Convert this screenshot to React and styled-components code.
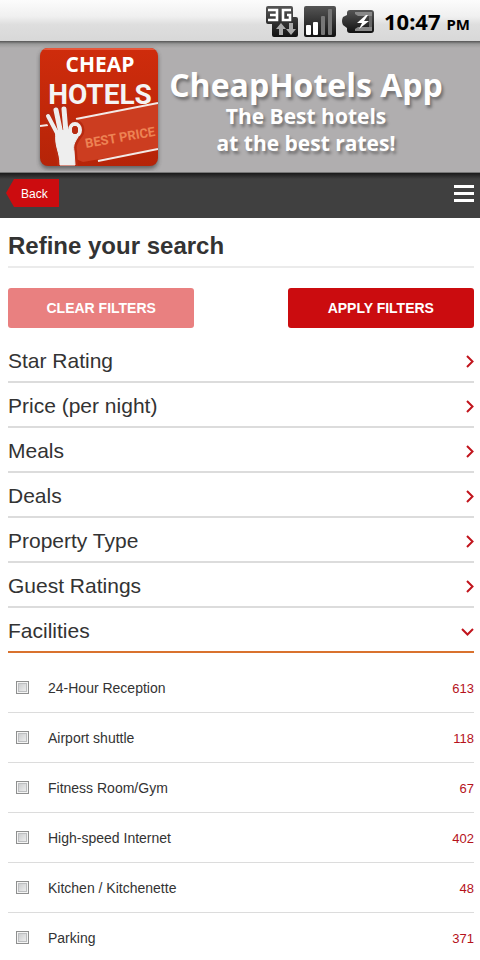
import React, { useState } from 'react';
import styled, { createGlobalStyle, css } from 'styled-components';

const GlobalStyle = createGlobalStyle`
  * {
    box-sizing: border-box;
  }

  body {
    margin: 0;
    background: #fff;
    color: #333;
    font-family: "Liberation Sans", Arial, sans-serif;
  }

  button {
    font-family: inherit;
  }
`;

const StatusBar = styled.div`
  display: flex;
  align-items: center;
  justify-content: flex-end;
  height: 41px;
  padding: 3px 10px 0 0;
  background: linear-gradient(#fcfcfc, #f0f0f0 40%, #dedede 60%, #d8d8d8);
  color: #000;
  font-family: "Noto Sans", "Open Sans", sans-serif;
  font-weight: 700;
`;

const StatusIcons = styled.svg`
  display: block;
  margin-right: 8px;
`;

const Clock = styled.div`
  font-size: 22px;
  line-height: 32px;

  small {
    margin-left: 6px;
    font-size: 15px;
  }
`;

const Banner = styled.header`
  display: flex;
  align-items: flex-start;
  height: 132px;
  padding: 4px 0 0 36px;
  background: linear-gradient(#555, #999 3px, #b0aeaf 7px);
  border-bottom: 1px solid #777;
`;

const Slogan = styled.div`
  padding-top: 22px;
  width: 286px;
  color: #fff;
  font-family: "Open Sans", "Noto Sans", sans-serif;
  font-weight: 700;
  text-align: center;
  text-shadow: 2px 3px 3px rgba(0, 0, 0, .35);

  h1 {
    margin: 0;
    font-size: 32px;
    line-height: 36px;
    white-space: nowrap;
  }

  p {
    margin: 0;
    font-size: 21px;
    line-height: 27px;
  }
`;

const Nav = styled.nav`
  display: flex;
  align-items: flex-start;
  justify-content: space-between;
  height: 45px;
  padding: 6px 6px 0;
  background: linear-gradient(#1a1a1a, #404040 6px);
`;

const BackLink = styled.a`
  width: 53px;
  height: 28px;
  padding-left: 15px;
  background: #cc0c0f;
  clip-path: polygon(0 50%, 8px 0, 100% 0, 100% 100%, 8px 100%);
  color: #fff;
  font-size: 12px;
  line-height: 30px;
  text-decoration: none;
`;

const MenuButton = styled.button`
  display: block;
  padding: 6px 0 0;
  border: none;
  background: none;
  cursor: pointer;

  svg {
    display: block;
  }
`;

const Content = styled.main`
  padding: 0 6px 0 8px;
`;

const Heading = styled.h2`
  margin: 0;
  padding-top: 12px;
  height: 50px;
  border-bottom: 2px solid #ebebeb;
  font-size: 24px;
  line-height: 32px;
`;

const Actions = styled.div`
  display: flex;
  justify-content: space-between;
  padding: 20px 0 10px;
`;

const ActionButton = styled.button`
  width: 40%;
  height: 40px;
  padding: 0;
  border: none;
  border-radius: 3px;
  background: ${p => (p.$muted ? '#e98080' : '#cb0c0f')};
  color: #fff;
  font-size: 14px;
  font-weight: 700;
  cursor: pointer;
`;

const SectionButton = styled.button`
  display: flex;
  align-items: center;
  justify-content: space-between;
  width: 100%;
  height: 45px;
  padding: 2px 0 0;
  border: none;
  border-bottom: 2px solid #dcdcdc;
  background: none;
  color: #333;
  font-size: 21px;
  text-align: left;
  cursor: pointer;

  svg {
    margin-top: 2px;
  }

  ${p => p.$open && css`
    border-bottom-color: #d9722e;
  `}
`;

const List = styled.ul`
  margin: 0;
  padding: 10px 0 0;
  list-style: none;
`;

const Option = styled.label`
  display: flex;
  align-items: center;
  height: 50px;
  padding-left: 8px;
  border-bottom: 1px solid #dcdcdc;
  font-size: 14px;
`;

const Checkbox = styled.input`
  appearance: none;
  width: 13px;
  height: 13px;
  margin: 0 19px 0 0;
  border: 1px solid #8e8f8f;
  background: linear-gradient(135deg, #c4c6c8, #f4f4f4);
  box-shadow: inset 0 0 0 1px #f4f4f4, inset 0 0 0 2px #bcbec0;

  &:checked {
    background: #cb0c0f;
  }
`;

const Count = styled.span`
  margin-left: auto;
  padding-top: 1px;
  color: #b5121b;
  font-size: 13px;
`;

const SECTIONS = [
  'Star Rating',
  'Price (per night)',
  'Meals',
  'Deals',
  'Property Type',
  'Guest Ratings',
  'Facilities',
];

const FACILITIES = [
  { name: '24-Hour Reception', count: 613 },
  { name: 'Airport shuttle', count: 118 },
  { name: 'Fitness Room/Gym', count: 67 },
  { name: 'High-speed Internet', count: 402 },
  { name: 'Kitchen / Kitchenette', count: 48 },
  { name: 'Parking', count: 371 },
];

function PhoneStatus() {
  return (
    <StatusIcons width="110" height="32" viewBox="0 1 110 32">
      <defs>
        <linearGradient id="chip" x1="0" y1="0" x2="0" y2="1">
          <stop offset="0" stopColor="#555" />
          <stop offset="1" stopColor="#111" />
        </linearGradient>
      </defs>
      {/* 3G with data arrows */}
      <path d="M2 1h23q2 0 2 2v9h3q2 0 2 2v16q0 2-2 2H8q-2 0-2-2V19H2q-2 0-2-2V3q0-2 2-2z" fill="url(#chip)" />
      <path d="M2 5h9v10H2M4 10h7M25 5h-8v10h7v-5h-3" fill="none" stroke="#fff" strokeWidth="2.6" />
      <path d="M15 18l5 6h-3v6h-4v-6h-3zM25 30l5-6h-3v-6h-4v6h-3z" fill="#aaa" />
      {/* signal */}
      <rect x="38" y="1" width="32" height="31" rx="2" fill="url(#chip)" />
      <rect x="40" y="20" width="5" height="10" rx="1" fill="#fff" />
      <rect x="47" y="17" width="5" height="13" rx="1" fill="#fff" />
      <rect x="55" y="11" width="4" height="19" rx="1" fill="#777" />
      <rect x="62" y="4" width="4" height="26" rx="1" fill="#777" />
      {/* battery */}
      <path d="M84 5h21q3 0 3 3v17q0 3-3 3H84q-3 0-3-3v-2l-4-3q-2-4 0-8l4-2V8q0-3 3-3z" fill="url(#chip)" />
      <path d="M89 7h17v4H92l-3-2zM89 26h17v-4H92l-3 2z" fill="#888" />
      <path d="M103 11h3v11h-3z" fill="#666" />
      <path d="M100 10l-9 8h5l-3 6 10-8h-5l4-6z" fill="#fff" />
    </StatusIcons>
  );
}

function Logo() {
  return (
    <svg width="127" height="126" viewBox="0 0 127 126" role="img" aria-label="Cheap Hotels, best price">
      <defs>
        <linearGradient id="tile" x1="0" y1="0" x2="0" y2="1">
          <stop offset="0" stopColor="#cf2c0c" />
          <stop offset="1" stopColor="#b52408" />
        </linearGradient>
        <clipPath id="tileClip">
          <rect x="4" y="3" width="118" height="118" rx="8" />
        </clipPath>
        <filter id="soft" x="-10%" y="-10%" width="120%" height="120%">
          <feGaussianBlur stdDeviation="2" />
        </filter>
      </defs>
      <rect x="4" y="5" width="118" height="119" rx="8" fill="#333" opacity=".6" filter="url(#soft)" />
      <rect x="4" y="3" width="118" height="118" rx="8" fill="url(#tile)" />
      <g clipPath="url(#tileClip)" fontWeight="700">
        <path d="M4 4h118" stroke="#e8563a" strokeWidth="2" />
        <path d="M40 74L122 58v46L47 117l-12-5z" fill="#cc3d20" />
        <path d="M4 81l8-1M40 74l82-16M62 116l60-12" fill="none" stroke="#f3e9e6" strokeWidth="2" />
        <text x="64" y="27" fontSize="21" fontFamily="Open Sans, sans-serif" fill="#fff" textAnchor="middle">CHEAP</text>
        <text x="64" y="59" fontSize="28" fontFamily="Roboto, sans-serif" fill="#f4f4f4" textAnchor="middle">HOTELS</text>
        <text transform="translate(50 103) rotate(-10)" fontSize="13" fontFamily="Roboto, sans-serif" fill="#ed8354">BEST PRICE</text>
        {/* hand: dark outline first, white shape over it */}
        {[{ color: '#b82a10', grow: 5 }, { color: '#eee', grow: 0 }].map(({ color, grow }) => (
          <g key={color} fill="none" stroke={color} strokeLinecap="round" strokeLinejoin="round">
            <path d="M12 71l10 19" strokeWidth={4 + grow} />
            <path d="M20 65l5 24M28 64l2 24" strokeWidth={5 + grow} />
            <ellipse cx="39" cy="85" rx="5" ry="6" strokeWidth={4 + grow} />
            <path
              d="M20 86l13-1c1 6 4 8 9 7-4 6-5 9-4 14l1 14H24c0-14-6-18-4-34z"
              fill={color}
              strokeWidth={1 + grow}
            />
          </g>
        ))}
        <ellipse cx="39" cy="85" rx="3" ry="4" fill="#b82a10" />
      </g>
    </svg>
  );
}

function Chevron({ open }) {
  return open ? (
    <svg width="13" height="8" viewBox="0 0 13 8">
      <path d="M1 1l5.5 5.5L12 1" fill="none" stroke="#c1141c" strokeWidth="2" />
    </svg>
  ) : (
    <svg width="8" height="13" viewBox="0 0 8 13">
      <path d="M1 1l5.500 5.500L1 12" fill="none" stroke="#c1141c" strokeWidth="2" />
    </svg>
  );
}

export default function App() {
  const [open, setOpen] = useState('Facilities');
  const [checked, setChecked] = useState([]);

  const toggle = (name) => {
    setChecked(c => (c.includes(name) ? c.filter(n => n !== name) : [...c, name]));
  };

  return (
    <>
      <GlobalStyle />
      <StatusBar>
        <PhoneStatus />
        <Clock>10:47<small>PM</small></Clock>
      </StatusBar>
      <Banner>
        <Logo />
        <Slogan>
          <h1>CheapHotels App</h1>
          <p>The Best hotels<br />at the best rates!</p>
        </Slogan>
      </Banner>
      <Nav>
        <BackLink href="#">Back</BackLink>
        <MenuButton aria-label="Menu">
          <svg width="20" height="18" viewBox="0 0 20 18">
            <path d="M0 1.5h20M0 8.5h20M0 15.5h20" stroke="#fff" strokeWidth="3" />
          </svg>
        </MenuButton>
      </Nav>
      <Content>
        <Heading>Refine your search</Heading>
        <Actions>
          <ActionButton $muted onClick={() => setChecked([])}>CLEAR FILTERS</ActionButton>
          <ActionButton>APPLY FILTERS</ActionButton>
        </Actions>
        {SECTIONS.map(name => (
          <SectionButton
            key={name}
            $open={open === name}
            aria-expanded={open === name}
            onClick={() => setOpen(open === name ? '' : name)}
          >
            {name}
            <Chevron open={open === name} />
          </SectionButton>
        ))}
        {open === 'Facilities' && (
          <List>
            {FACILITIES.map(f => (
              <li key={f.name}>
                <Option>
                  <Checkbox
                    type="checkbox"
                    checked={checked.includes(f.name)}
                    onChange={() => toggle(f.name)}
                  />
                  {f.name}
                  <Count>{f.count}</Count>
                </Option>
              </li>
            ))}
          </List>
        )}
      </Content>
    </>
  );
}
